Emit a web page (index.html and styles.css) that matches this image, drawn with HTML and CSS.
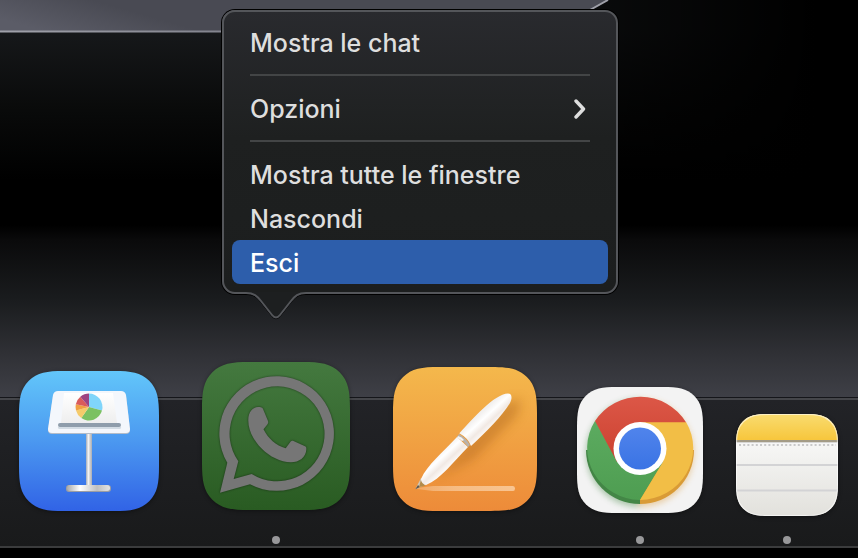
FILE: index.html
```
<!DOCTYPE html>
<html lang="it">
    <head>
        <meta charset="utf-8">
        <title>Dock</title>
        <link rel="stylesheet" href="styles.css">
    </head>
    <body>
        <div class="desktop">
            <svg class="shelf" width="612" height="34" viewBox="0 0 612 34" aria-hidden="true">
                <defs>
                    <linearGradient id="shelf-fill" gradientUnits="userSpaceOnUse" x1="60" y1="36" x2="72" y2="-6">
                        <stop offset="0" stop-color="#5b5c67"/>
                        <stop offset="1" stop-color="#494a53"/>
                    </linearGradient>
                    <linearGradient id="shelf-edge">
                        <stop offset="0" stop-color="#a0a1aa"/>
                        <stop offset=".36" stop-color="#83848e"/>
                        <stop offset="1" stop-color="#a0a1aa"/>
                    </linearGradient>
                </defs>
                <path d="M0 0H608L590 10 560 32H0z" fill="url(#shelf-fill)"/>
                <path d="M0 31.500H560L590 10 608 0" fill="none" stroke="url(#shelf-edge)" stroke-width="2"/>
            </svg>
        </div>
        <nav class="dock">
            <ul class="dock-items">
                <li class="dock-item">
                    <button class="app app-keynote" aria-label="Keynote">
                        <svg viewBox="0 0 140 140">
                            <defs>
                                <path id="tile" d="M32 0H68C80 0 87 1 93 7 99 13 100 20 100 32V68C100 80 99 87 93 93 87 99 80 100 68 100H32C20 100 13 99 7 93 1 87 0 80 0 68V32C0 20 1 13 7 7 13 1 20 0 32 0Z"/>
                                <linearGradient id="blue" x1="0" y1="0" x2="0" y2="1">
                                    <stop offset="0" stop-color="#62c6fa"/>
                                    <stop offset=".5" stop-color="#4b98f0"/>
                                    <stop offset="1" stop-color="#3163e6"/>
                                </linearGradient>
                                <linearGradient id="pole">
                                    <stop offset="0" stop-color="#a3abb8"/>
                                    <stop offset=".4" stop-color="#f4f4f4"/>
                                    <stop offset=".65" stop-color="#d0d0d0"/>
                                    <stop offset="1" stop-color="#a9adb5"/>
                                </linearGradient>
                                <linearGradient id="foot">
                                    <stop offset="0" stop-color="#aaa"/>
                                    <stop offset=".3" stop-color="#fff"/>
                                    <stop offset=".7" stop-color="#bfbfbf"/>
                                    <stop offset="1" stop-color="#e4e4e4"/>
                                </linearGradient>
                                <linearGradient id="sheet" x1="0" y1="0" x2="0" y2="1">
                                    <stop offset="0" stop-color="#fff"/>
                                    <stop offset="1" stop-color="#eee"/>
                                </linearGradient>
                            </defs>
                            <use href="#tile" transform="scale(1.4)" fill="url(#blue)"/>
                            <rect x="67" y="61" width="6" height="55" fill="url(#pole)"/>
                            <path d="M39 21H102Q106 21 107 25L111 59Q111 63 107 63H33Q29 63 29 59L34 25Q35 21 39 21Z" fill="#b4bcc8"/>
                            <path d="M39 20H102Q106 20 107 24L111 58Q111 62 107 62H33Q29 62 29 58L34 24Q35 20 39 20Z" fill="#f4f7fc"/>
                            <path d="M45 22H94L98 52H42Z" fill="url(#sheet)"/>
                            <rect x="39" y="55" width="63" height="3" rx="1.5" fill="#d3dce4"/>
                            <rect x="39" y="52" width="63" height="4" rx="2" fill="#8f9dab"/>
                            <path d="M70 36V22.5A13.5 13.5 0 0 1 83 39.5Z" fill="#80d5fa"/>
                            <path d="M70 36L83 39.5A13.5 13.5 0 0 1 62.3 47.1Z" fill="#7bc162"/>
                            <path d="M70 36L62.3 47.1A13.5 13.5 0 0 1 57 39.5Z" fill="#f5cb6a"/>
                            <path d="M70 36L57 39.5A13.5 13.5 0 0 1 56.8 33.2Z" fill="#f0a043"/>
                            <path d="M70 36L56.8 33.2A13.5 13.5 0 0 1 61.3 25.7Z" fill="#d95b5b"/>
                            <path d="M70 36L61.3 25.7A13.5 13.5 0 0 1 70 22.5Z" fill="#9d4381"/>
                            <rect x="47" y="114" width="45" height="7" rx="3" fill="#9b9da3"/>
                            <rect x="48" y="114" width="43" height="6" rx="3" fill="url(#foot)"/>
                        </svg>
                    </button>
                </li>
                <li class="dock-item dock-item-open">
                    <button class="app app-whatsapp" aria-label="WhatsApp">
                        <svg viewBox="0 0 148 148">
                            <defs>
                                <linearGradient id="green" x1="0" y1="0" x2="0" y2="1">
                                    <stop offset="0" stop-color="#44793f"/>
                                    <stop offset="1" stop-color="#295b22"/>
                                </linearGradient>
                            </defs>
                            <use href="#tile" transform="scale(1.48)" fill="url(#green)"/>
                            <g class="glyph">
                                <path fill-rule="evenodd" d="M25.3 100.7A57.3 57.3 0 1 1 48 122.3L18 130.7ZM36.3 99.3L31.7 117 49.7 112A47.5 47.5 0 1 0 36.3 99.3Z"/>
                                <path d="M46.3 58C46.3 50 51 45 56 45 59 45 60.5 45.5 61 47L66 59C66.5 60.5 66 61.5 65.3 62.5L61.5 67.3C66 76.5 74 83.5 83.7 86.3L88.7 79.5C89.5 78.5 90.5 78.5 91.5 79L103 84.3C104.3 85 104.5 86 104.3 87.5 104 95.5 97 100.3 89 100.3 68 100 46 78 46.3 58Z"/>
                            </g>
                        </svg>
                    </button>
                    <div class="menu" role="menu">
                        <button class="menu-item" role="menuitem">Mostra le chat</button>
                        <hr class="menu-line">
                        <button class="menu-item" role="menuitem">
                            Opzioni
                            <svg class="chevron" width="14" height="22" viewBox="0 0 14 22" aria-hidden="true">
                                <path d="M2 3L9.500 11 2 19" fill="none" stroke="#dedede" stroke-width="3.400" stroke-linecap="round" stroke-linejoin="round"/>
                            </svg>
                        </button>
                        <hr class="menu-line">
                        <button class="menu-item" role="menuitem">Mostra tutte le finestre</button>
                        <button class="menu-item" role="menuitem">Nascondi</button>
                        <button class="menu-item menu-item-active" role="menuitem">Esci</button>
                        <svg class="menu-tail" width="64" height="28" viewBox="0 0 64 28" aria-hidden="true">
                            <path d="M2 2.500C10 2.500 13 5.500 17 10.500L28 24.500Q32 29 36 24.500L47 10.500C51 5.500 54 2.500 62 2.500" fill="none" stroke="#000"/>
                            <path d="M0 0V1H2C10 1 13 4 17 9L28 23Q32 28 36 23L47 9C51 4 54 1 62 1H64V0Z" fill="#1d1f20"/>
                            <path d="M0 1H2C10 1 13 4 17 9L28 23Q32 28 36 23L47 9C51 4 54 1 62 1H64" fill="none" stroke="#54565a" stroke-width="2"/>
                        </svg>
                    </div>
                </li>
                <li class="dock-item">
                    <button class="app app-pages" aria-label="Pages">
                        <svg viewBox="0 0 144 144">
                            <defs>
                                <linearGradient id="orange" x1="0" y1="0" x2="0" y2="1">
                                    <stop offset="0" stop-color="#f4b84c"/>
                                    <stop offset="1" stop-color="#ed8b39"/>
                                </linearGradient>
                                <linearGradient id="barrel" gradientUnits="userSpaceOnUse" x1="66" y1="66" x2="78" y2="79">
                                    <stop offset="0" stop-color="#f2f0ef"/>
                                    <stop offset=".35" stop-color="#fff"/>
                                    <stop offset=".7" stop-color="#f1e9e4"/>
                                    <stop offset="1" stop-color="#fbf8f6"/>
                                </linearGradient>
                                <linearGradient id="ink">
                                    <stop offset="0" stop-color="#fff" stop-opacity=".2"/>
                                    <stop offset=".4" stop-color="#ffe6cb" stop-opacity=".5"/>
                                    <stop offset="1" stop-color="#ffe6cb" stop-opacity=".6"/>
                                </linearGradient>
                                <filter id="soft" x="-30%" y="-30%" width="160%" height="160%">
                                    <feGaussianBlur stdDeviation="6"/>
                                </filter>
                            </defs>
                            <use href="#tile" transform="scale(1.44)" fill="url(#orange)"/>
                            <path d="M40 113L80 92 124 48 128 32 112 36 60 92Z" fill="#a85f17" opacity=".45" filter="url(#soft)"/>
                            <path d="M24 121L40 119H120Q122 119 122 121.500T120 124H40L24 122Z" fill="url(#ink)"/>
                            <path d="M22.300 122.300L28 111 34 117Z" fill="#cfc5b5"/>
                            <path d="M22.300 122.300L25 118 27 120Z" fill="#5d564c"/>
                            <path d="M28 113L30 115 32 119 26 120Z" fill="#b28b4b"/>
                            <path d="M64 70C50 85 34 98 28 112 28 115 30 117.500 33 118 48 112 60 95 75 80Z" fill="url(#barrel)"/>
                            <path d="M66 67Q73 71 77 78L75 80Q70 73 64 70Z" fill="#b9b2ab"/>
                            <path d="M65 69Q69 70 71 73L69 74Q67 72 64 71Z" fill="#f5f5f5"/>
                            <path d="M66.300 66.300C80 52 101 27 115 26.500 119 26.500 119.500 31 117 36 109 49 93 65 78 79Q75 71 66.300 66.300Z" fill="url(#barrel)"/>
                        </svg>
                    </button>
                </li>
                <li class="dock-item dock-item-open">
                    <button class="app app-chrome" aria-label="Google Chrome">
                        <svg viewBox="0 0 126 126">
                            <defs>
                                <linearGradient id="red" x1="0" y1="0" x2="0" y2="1">
                                    <stop offset="0" stop-color="#dc5747"/>
                                    <stop offset="1" stop-color="#cb412f"/>
                                </linearGradient>
                                <linearGradient id="leaf" x1="0" y1="0" x2="0" y2="1">
                                    <stop offset="0" stop-color="#5cab60"/>
                                    <stop offset="1" stop-color="#4e9d51"/>
                                </linearGradient>
                                <linearGradient id="core" x1="0" y1="0" x2="0" y2="1">
                                    <stop offset="0" stop-color="#5084ec"/>
                                    <stop offset="1" stop-color="#3a73e4"/>
                                </linearGradient>
                                <filter id="glow" x="-20%" y="-20%" width="140%" height="140%">
                                    <feGaussianBlur stdDeviation="3"/>
                                </filter>
                            </defs>
                            <use href="#tile" transform="scale(1.26)" fill="#f3f3f3"/>
                            <g filter="url(#glow)" opacity=".45">
                                <path d="M63 12A54 54 0 0 0 63 120Z" fill="#4b8a4c"/>
                                <path d="M63 12A54 54 0 0 1 63 120Z" fill="#dda24c"/>
                            </g>
                            <path d="M9 63A54 54 0 0 0 63 117V62Z" fill="#438646"/>
                            <path d="M117 63A54 54 0 0 1 63 117V62Z" fill="#d99b36"/>
                            <path d="M18 34A54 52 0 0 0 63 113L86 75 63 62Z" fill="url(#leaf)"/>
                            <path d="M109 35A54 52 0 0 1 63 113L86 75 63 35Z" fill="#f2be46"/>
                            <path d="M18 34A54 54 0 0 1 109 35.300H63L40 75Z" fill="url(#red)"/>
                            <circle cx="63" cy="61.500" r="26.500" fill="#fff"/>
                            <circle cx="63" cy="61.500" r="21" fill="url(#core)"/>
                        </svg>
                    </button>
                </li>
                <li class="dock-item dock-item-open">
                    <button class="app app-notes" aria-label="Note">
                        <svg viewBox="0 0 102 102">
                            <defs>
                                <linearGradient id="paper" x1="0" y1="0" x2="0" y2="1">
                                    <stop offset=".27" stop-color="#f7f7f6"/>
                                    <stop offset="1" stop-color="#e2e1dc"/>
                                </linearGradient>
                                <linearGradient id="binding" x1="0" y1="0" x2="0" y2="1">
                                    <stop offset="0" stop-color="#f9dc70"/>
                                    <stop offset="1" stop-color="#f7c63c"/>
                                </linearGradient>
                                <clipPath id="note-clip">
                                    <use href="#tile" transform="scale(1.02)"/>
                                </clipPath>
                            </defs>
                            <g clip-path="url(#note-clip)">
                                <rect width="102" height="102" fill="url(#paper)"/>
                                <rect width="102" height="26" fill="url(#binding)"/>
                                <rect y="26" width="102" height="2" fill="#a39b86"/>
                                <rect y="28" width="102" height="1" fill="#d7d6d4"/>
                                <path d="M3 31H100" stroke="#c9c9c9" stroke-width="2" stroke-dasharray="2 2.200"/>
                                <path d="M0 51H102M0 76.500H102" stroke="#d3d3d5" stroke-width="2"/>
                            </g>
                            <use href="#tile" transform="translate(.5 .5) scale(1.01)" fill="none" stroke="#fff" stroke-opacity=".6"/>
                        </svg>
                    </button>
                </li>
            </ul>
        </nav>
    </body>
</html>
```
FILE: styles.css
```
* {
    box-sizing: border-box;
}
body {
    margin: 0;
    height: 100vh;
    display: flex;
    flex-direction: column;
    overflow: hidden;
    padding-bottom: 10px;
    background: #000;
    font-family: Inter, "Liberation Sans", sans-serif;
}
button {
    border: 0;
    padding: 0;
    background: none;
    font: inherit;
    color: inherit;
}
svg {
    display: block;
}
.desktop {
    flex: 1;
    background:
        linear-gradient(90deg, rgba(0,0,0,0) 40%, rgba(0,0,0,.6) 70%, #000 95%) 0 0 / 100% 225px no-repeat,
        linear-gradient(#16181a 32px, #090a0a 110px, #000 180px, #000 225px, #0a0a0b 240px, #1a1c1e 300px, #303136 355px, #3f4047 100%);
}
.dock {
    height: 150px;
    display: flex;
    align-items: flex-end;
    border-top: 2px solid #45464a;
    border-bottom: 2px solid #3b3c3d;
    box-shadow: 0 -1px 0 #15161a;
    background: linear-gradient(#222327, #191a1b);
}
.dock-items {
    display: flex;
    align-items: flex-end;
    gap: 8px;
    margin: 0;
    padding: 0 0 18px 2px;
    list-style: none;
}
.dock-item {
    position: relative;
}
/* running indicator */
.dock-item-open::after {
    content: "";
    position: absolute;
    left: 50%;
    bottom: -16px;
    width: 8px;
    height: 8px;
    margin-left: -4px;
    border-radius: 50%;
    background: #98989a;
}
.app {
    display: block;
    box-sizing: content-box;
}
.app svg {
    filter: drop-shadow(0 1px 2px rgba(0,0,0,.4));
}
.app-keynote {
    width: 140px;
    padding: 0 17px 17px;
}
.app-whatsapp {
    width: 148px;
    padding: 0 18px 18px;
}
.app-pages {
    width: 144px;
    padding: 0 17px 17px;
}
.app-chrome {
    width: 126px;
    padding: 0 15px 15px;
}
.app-notes {
    width: 102px;
    padding: 0 10px 12px;
}
.glyph {
    fill: #767676;
    filter: drop-shadow(0 0 1px rgba(0,0,0,.5));
}
.menu {
    position: absolute;
    left: 38px;
    bottom: 234px;
    width: 396px;
    padding: 8px;
    border: 2px solid #54565a;
    border-radius: 13px;
    background: linear-gradient(#292a2e, #1e2020 45%, #1c1e1e);
    box-shadow: 0 0 0 1px #000;
    color: #dedede;
    font-size: 25px;
    font-weight: 500;
}
.menu-item {
    display: flex;
    align-items: center;
    justify-content: space-between;
    width: 100%;
    height: 44px;
    padding: 2px 20px 0 18px;
    border-radius: 8px;
    text-align: left;
}
.menu-item-active {
    background: #2d5eab;
    color: #fff;
}
.menu-line {
    height: 2px;
    margin: 10px 18px;
    border: 0;
    background: #434546;
}
.menu-tail {
    position: absolute;
    left: 20px;
    top: 100%;
}
```
